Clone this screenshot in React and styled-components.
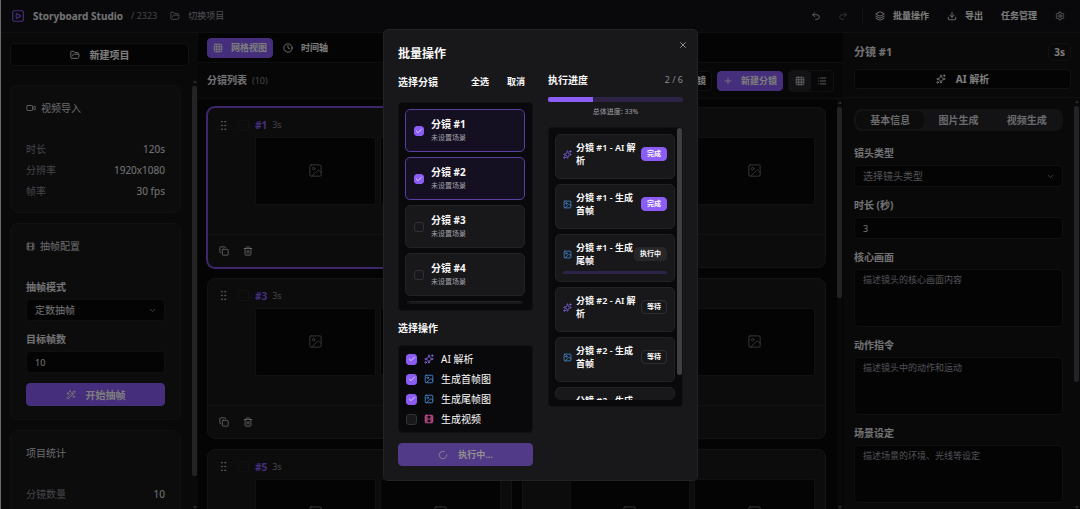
import styled, { createGlobalStyle, css } from 'styled-components'
import {
   Check,
   ChevronDown,
   Clock,
   Copy,
   Download,
   Film,
   FolderOpen,
   Grid3x3,
   GripVertical,
   Image,
   Layers,
   List,
   LoaderCircle,
   Plus,
   Redo2,
   Settings,
   Sparkles,
   SquarePlay,
   Trash2,
   Undo2,
   Video,
   WandSparkles,
   X,
} from 'lucide-react'

const GlobalStyle = createGlobalStyle`
   * {
      box-sizing: border-box;
   }
   body {
      margin: 0;
      overflow: hidden;
      background: #09090b;
      color: #fafafa;
      font: 10px/16px 'Noto Sans', 'Noto Sans CJK SC', sans-serif;
   }
   h1, h2, h3, p, ul, dl, dd {
      margin: 0;
      padding: 0;
   }
   ul {
      list-style: none;
   }
   button, input, select, textarea {
      font: inherit;
      color: inherit;
   }
   svg {
      display: block;
      flex-shrink: 0;
   }
`

// ---------- shared parts ----------

const Button = styled.button`
   display: flex;
   align-items: center;
   justify-content: center;
   gap: ${(props) => (props.$wide ? '10px' : '8px')};
   width: ${(props) => (props.$wide ? '100%' : 'auto')};
   height: ${(props) => (props.$tall ? '23px' : '20px')};
   padding: 0 5px;
   border: 1px solid #222225;
   border-radius: 4px;
   background: #09090b;
   font-size: ${(props) => (props.$wide ? '10px' : '9px')};
   font-weight: 700;
   white-space: nowrap;
   cursor: pointer;
   ${(props) =>
      props.$primary &&
      css`
         border-color: #8b5cf6;
         background: #8b5cf6;
      `}
   ${(props) =>
      props.$ghost &&
      css`
         border-color: transparent;
         background: transparent;
      `}
   &:disabled {
      border-color: #513b88;
      background: #513b88;
      color: #94908f;
      font-size: 9px;
      cursor: default;
   }
`

const IconButton = styled.button`
   display: grid;
   place-items: center;
   width: 20px;
   height: 20px;
   padding: 0;
   border: 0;
   border-radius: 4px;
   background: ${(props) => (props.$active ? '#27272a' : 'transparent')};
   color: ${(props) => (props.$muted ? '#71717a' : '#d4d4d8')};
   cursor: pointer;
`

const Field = styled.label`
   display: flex;
   flex-direction: column;
   gap: 4px;
   color: #e4e4e7;
   font-weight: 700;
`

const control = css`
   width: 100%;
   height: 22px;
   padding: 0 8px;
   border: 1px solid #1f1f22;
   border-radius: 4px;
   outline: 0;
   background: #09090b;
   font-weight: 400;
`

const TextInput = styled.input`
   ${control}
   font-size: 9px;
`

const TextArea = styled.textarea`
   ${control}
   display: block;
   height: 58px;
   padding: 2px 8px;
   font-size: 9px;
   resize: none;
   &::placeholder {
      color: #a1a1aa;
   }
`

const SelectBox = styled.span`
   display: grid;
   align-items: center;
   > * {
      grid-area: 1 / 1;
   }
   > svg {
      justify-self: end;
      margin-right: 8px;
      color: #a1a1aa;
      pointer-events: none;
   }
`

const SelectInput = styled.select`
   ${control}
   appearance: none;
   color: ${(props) => (props.$empty ? '#a1a1aa' : '#e4e4e7')};
`

function Select({ options, empty }) {
   return (
      <SelectBox>
         <SelectInput $empty={empty}>
            {options.map((option) => (
               <option key={option}>{option}</option>
            ))}
         </SelectInput>
         <ChevronDown size={9} />
      </SelectBox>
   )
}

const CheckBox = styled.span`
   display: inline-grid;
   place-items: center;
   flex-shrink: 0;
   > * {
      grid-area: 1 / 1;
   }
   > svg {
      color: #fff;
      pointer-events: none;
   }
`

const CheckInput = styled.input`
   appearance: none;
   width: ${(props) => props.$size}px;
   height: ${(props) => props.$size}px;
   margin: 0;
   border: 1px solid ${(props) => (props.$faint ? '#242427' : '#323236')};
   border-radius: 3px;
   background: ${(props) => (props.$dark ? '#18181b' : 'transparent')};
   &:checked {
      border-color: #8b5cf6;
      background: #8b5cf6;
   }
`

function Checkbox({ checked, dark, faint, size = 10, label }) {
   return (
      <CheckBox>
         <CheckInput
            type="checkbox"
            defaultChecked={checked}
            $dark={dark}
            $faint={faint}
            $size={size}
            aria-label={label}
         />
         {checked && <Check size={8} />}
      </CheckBox>
   )
}

const Track = styled.div`
   display: flex;
   flex-direction: column;
   flex-shrink: 0;
   align-items: center;
   gap: 3px;
   width: 5px;
   padding-top: 2px;
   background: #121214;
   &::before,
   &::after {
      content: '';
      border: 2px solid transparent;
   }
   &::before {
      border-top: 0;
      border-bottom: 3px solid #52525b;
   }
   &::after {
      margin-top: auto;
      border-bottom: 0;
      border-top: 3px solid #52525b;
   }
`

const Thumb = styled.div`
   width: 100%;
   height: ${(props) => props.$length};
   border-radius: 2px;
   background: #47474a;
`

function ScrollBar({ length }) {
   return (
      <Track>
         <Thumb $length={length} />
      </Track>
   )
}

// ---------- page frame ----------

const Page = styled.div`
   display: flex;
   flex-direction: column;
   height: 100vh;
   border-left: 1px solid #d4d4d8;
`

const TopBar = styled.header`
   display: flex;
   align-items: center;
   gap: 8px;
   flex-shrink: 0;
   height: 33px;
   padding: 0 9px 0 10px;
   border-bottom: 1px solid #1f1f22;
   background: #131316;
   > svg {
      color: #8b5cf6;
   }
`

const Brand = styled.h1`
   color: #e4e4e7;
   font-size: 10px;
   font-weight: 700;
   white-space: nowrap;
`

const Muted = styled.span`
   color: #8a8a93;
   font-size: 9px;
   font-weight: 400;
   white-space: nowrap;
`

const SwitchLink = styled.a`
   display: flex;
   align-items: center;
   gap: 8px;
   margin-left: 5px;
   color: #a1a1aa;
   font-size: 9px;
   text-decoration: none;
   white-space: nowrap;
`

const Actions = styled.nav`
   display: flex;
   align-items: center;
   gap: 4px;
   margin-left: auto;
   ${Button} {
      padding: 0 6px;
   }
   ${IconButton} {
      width: 23px;
   }
`

const Separator = styled.span`
   width: 1px;
   height: 16px;
   margin: 0 1px 0 3px;
   background: #27272a;
`

const Columns = styled.div`
   display: grid;
   grid-template-columns: 197px minmax(0, 1fr) 237px;
   flex: 1;
   min-height: 0;
`

const Side = styled.aside`
   display: flex;
   flex-direction: column;
   min-height: 0;
   background: #121213;
`

const Scroll = styled.div`
   display: flex;
   flex: 1;
   gap: 11px;
   min-height: 0;
   padding: 0 1px 0 ${(props) => props.$start || 9}px;
   overflow: hidden;
`

const ScrollBody = styled.div`
   display: flex;
   flex: 1;
   flex-direction: column;
   gap: ${(props) => props.$gap || 10}px;
   min-width: 0;
   padding-top: ${(props) => props.$top}px;
`

// ---------- left column ----------

const NewProject = styled.div`
   padding: 10px 9px 12px;
`

const Card = styled.section`
   display: flex;
   flex-direction: column;
   flex-shrink: 0;
   gap: 10px;
   padding: 14px 15px 13px;
   border: 1px solid #222225;
   border-radius: 8px;
   background: #18181b;
`

const CardTitle = styled.h2`
   display: flex;
   align-items: center;
   gap: 5px;
   margin-bottom: 15px;
   color: #d4d4d8;
   font-size: 10px;
   font-weight: 400;
`

const Stats = styled.dl`
   display: grid;
   gap: 5px;
   > div {
      display: flex;
      justify-content: space-between;
   }
   dt {
      color: #8a8a93;
   }
   dd {
      color: #e4e4e7;
   }
`

const Fields = styled.div`
   display: flex;
   flex-direction: column;
   gap: ${(props) => props.$gap}px;
`

function Sidebar() {
   return (
      <Side>
         <NewProject>
            <Button $wide $tall>
               <FolderOpen size={10} />
               新建项目
            </Button>
         </NewProject>
         <Scroll>
            <ScrollBody $top={7}>
               <Card>
                  <CardTitle>
                     <Video size={10} />
                     视频导入
                  </CardTitle>
                  <Stats>
                     <div>
                        <dt>时长</dt>
                        <dd>120s</dd>
                     </div>
                     <div>
                        <dt>分辨率</dt>
                        <dd>1920x1080</dd>
                     </div>
                     <div>
                        <dt>帧率</dt>
                        <dd>30 fps</dd>
                     </div>
                  </Stats>
               </Card>
               <Card>
                  <CardTitle>
                     <Film size={9} />
                     抽帧配置
                  </CardTitle>
                  <Fields $gap={10}>
                     <Field>
                        抽帧模式
                        <Select options={['定数抽帧', '定时抽帧']} />
                     </Field>
                     <Field>
                        目标帧数
                        <TextInput defaultValue="10" />
                     </Field>
                     <Button $wide $tall $primary>
                        <WandSparkles size={10} />
                        开始抽帧
                     </Button>
                  </Fields>
               </Card>
               <Card>
                  <CardTitle>项目统计</CardTitle>
                  <Stats>
                     <div>
                        <dt>分镜数量</dt>
                        <dd>10</dd>
                     </div>
                  </Stats>
               </Card>
            </ScrollBody>
            <ScrollBar length="390px" />
         </Scroll>
      </Side>
   )
}

// ---------- storyboard grid ----------

const Main = styled.main`
   display: flex;
   flex-direction: column;
   min-height: 0;
`

const ViewTabs = styled.div`
   display: flex;
   align-items: center;
   gap: 4px;
   height: 30px;
   padding: 0 9px;
   border-bottom: 1px solid #1c1c1f;
`

const ListHeader = styled.div`
   display: flex;
   align-items: center;
   gap: 5px;
   height: 36px;
   padding: 0 9px;
   border-bottom: 1px solid #1c1c1f;
   background: #0e0e10;
   h2 {
      margin-right: auto;
      color: #e4e4e7;
      font-size: 10px;
      font-weight: 700;
   }
   ${Muted} {
      margin-left: 5px;
   }
`

const Toggle = styled.div`
   display: flex;
   border: 1px solid #222225;
   border-radius: 4px;
   ${IconButton} {
      width: 22px;
   }
`

const Grid = styled.div`
   display: grid;
   flex: 1;
   grid-template-columns: 1fr 1fr;
   align-content: start;
   gap: 10px;
   min-width: 0;
   padding-top: 8px;
`

const Shot = styled.article`
   border: 1px solid ${(props) => (props.$active ? '#7c4ddb' : '#27272a')};
   border-radius: 8px;
   background: #18181b;
   box-shadow: ${(props) => (props.$active ? '0 0 0 1px #7c4ddb' : 'none')};
`

const ShotBody = styled.div`
   display: grid;
   grid-template-columns: 14px 12px 1fr;
   column-gap: 6px;
   align-items: center;
   padding: 9px 10px 29px 9px;
   > svg {
      color: #b4b4bb;
   }
`

const ShotName = styled.h3`
   display: flex;
   align-items: center;
   gap: 5px;
   color: #8b5cf6;
   font-size: 10px;
   font-weight: 700;
`

const Frames = styled.div`
   display: grid;
   grid-column: 3;
   grid-template-columns: 1fr 1fr;
   gap: 4px;
   margin-top: 4px;
`

const Frame = styled.div`
   display: grid;
   place-items: center;
   aspect-ratio: 16 / 9;
   border: 1px solid #222225;
   border-radius: 2px;
   background: #09090b;
   color: #71717a;
`

const ShotFooter = styled.footer`
   display: flex;
   gap: 4px;
   padding: 6px;
   border-top: 1px solid #27272a;
`

function ShotCard({ number, active }) {
   return (
      <Shot $active={active}>
         <ShotBody>
            <GripVertical size={13} strokeWidth={1.5} />
            <Checkbox label={`分镜 #${number}`} size={11} faint />
            <ShotName>
               #{number} <Muted>3s</Muted>
            </ShotName>
            <Frames>
               <Frame>
                  <Image size={15} strokeWidth={1.5} />
               </Frame>
               <Frame>
                  <Image size={15} strokeWidth={1.5} />
               </Frame>
            </Frames>
         </ShotBody>
         <ShotFooter>
            <IconButton aria-label="复制">
               <Copy size={10} />
            </IconButton>
            <IconButton aria-label="删除">
               <Trash2 size={10} />
            </IconButton>
         </ShotFooter>
      </Shot>
   )
}

function Board() {
   return (
      <Main>
         <ViewTabs>
            <Button $primary>
               <Grid3x3 size={10} />
               网格视图
            </Button>
            <Button $ghost>
               <Clock size={10} />
               时间轴
            </Button>
         </ViewTabs>
         <ListHeader>
            <h2>
               分镜列表
               <Muted>(10)</Muted>
            </h2>
            <Button>导入分镜</Button>
            <Button $primary>
               <Plus size={10} />
               新建分镜
            </Button>
            <Toggle>
               <IconButton $active aria-label="网格">
                  <Grid3x3 size={10} />
               </IconButton>
               <IconButton aria-label="列表">
                  <List size={10} />
               </IconButton>
            </Toggle>
         </ListHeader>
         <Scroll>
            <Grid>
               {[1, 2, 3, 4, 5, 6].map((number) => (
                  <ShotCard key={number} number={number} active={number === 1} />
               ))}
            </Grid>
            <ScrollBar length="191px" />
         </Scroll>
      </Main>
   )
}

// ---------- inspector ----------

const InspectorHead = styled.div`
   display: grid;
   grid-template-columns: 1fr auto;
   align-items: center;
   gap: 8px;
   padding: 10px 9px 8px 11px;
   border-bottom: 1px solid #1f1f22;
   h2 {
      color: #e4e4e7;
      font-size: 11px;
      font-weight: 700;
   }
   ${Button} {
      grid-column: 1 / -1;
   }
`

const Duration = styled.span`
   padding: 0 5px;
   border: 1px solid #222225;
   border-radius: 4px;
   font-weight: 700;
`

const Tabs = styled.div`
   display: grid;
   grid-template-columns: 1fr 1fr 1fr;
   padding: 2px;
   border-radius: 8px;
   background: #27272a;
`

const Tab = styled.button`
   height: 18px;
   padding: 0;
   border: 0;
   border-radius: 6px;
   background: ${(props) => (props.$active ? '#19191b' : 'transparent')};
   color: #d4d4d8;
   font-weight: 700;
`

function Inspector() {
   return (
      <Side>
         <InspectorHead>
            <h2>分镜 #1</h2>
            <Duration>3s</Duration>
            <Button $wide>
               <Sparkles size={10} />
               AI 解析
            </Button>
         </InspectorHead>
         <Scroll $start={11}>
            <ScrollBody $top={11} $gap={14}>
               <Tabs>
                  <Tab $active>基本信息</Tab>
                  <Tab>图片生成</Tab>
                  <Tab>视频生成</Tab>
               </Tabs>
               <Fields $gap={10}>
                  <Field>
                     镜头类型
                     <Select empty options={['选择镜头类型', '特写', '全景']} />
                  </Field>
                  <Field>
                     时长 (秒)
                     <TextInput defaultValue="3" />
                  </Field>
                  <Field>
                     核心画面
                     <TextArea placeholder="描述镜头的核心画面内容" />
                  </Field>
                  <Field>
                     动作指令
                     <TextArea placeholder="描述镜头中的动作和运动" />
                  </Field>
                  <Field>
                     场景设定
                     <TextArea placeholder="描述场景的环境、光线等设定" />
                  </Field>
               </Fields>
            </ScrollBody>
            <ScrollBar length="276px" />
         </Scroll>
      </Side>
   )
}

// ---------- batch dialog ----------

const Overlay = styled.div`
   position: fixed;
   inset: 0;
   display: grid;
   place-items: center;
   padding: 1px 0 0 1px;
   background: rgba(0, 0, 0, 0.5);
`

const Dialog = styled.div`
   width: 100%;
   max-width: 315px;
   padding: 14px;
   border: 1px solid #222225;
   border-radius: 5px;
   background: #18181b;
`

const DialogHead = styled.div`
   display: flex;
   justify-content: space-between;
   height: 18px;
   h2 {
      padding-top: 2px;
      font-size: 12px;
      font-weight: 700;
   }
   ${IconButton} {
      margin: -9px -10px 0 0;
      color: #a1a1aa;
   }
`

const DialogColumns = styled.div`
   display: grid;
   grid-template-columns: minmax(0, 1fr) minmax(0, 1fr);
   gap: 15px;
`

const SectionHead = styled.div`
   display: flex;
   align-items: center;
   justify-content: space-between;
   height: ${(props) => props.$height}px;
   h3 {
      font-size: 10px;
      font-weight: 700;
   }
`

const Links = styled.div`
   display: flex;
   gap: 6px;
   margin-right: 2px;
`

const Panel = styled.div`
   display: flex;
   margin-bottom: ${(props) => props.$after || 0}px;
   border: 1px solid #111113;
   border-radius: 4px;
   background: #09090b;
`

const Viewport = styled.ul`
   display: flex;
   flex: 1;
   flex-direction: column;
   gap: 5px;
   height: ${(props) => props.$height}px;
   margin: 6px 7px 6px 6px;
   overflow: hidden;
   border-radius: 5px;
   li {
      flex-shrink: 0;
   }
`

const Pick = styled.label`
   display: flex;
   align-items: center;
   gap: 7px;
   height: 43px;
   padding: 0 8px;
   border: 1px solid ${(props) => (props.$on ? '#5b3fa0' : '#222225')};
   border-radius: 5px;
   background: ${(props) => (props.$on ? '#150f22' : '#18181b')};
   font-weight: 700;
   line-height: 15px;
   small {
      display: block;
      color: #a1a1aa;
      font-size: 7px;
      font-weight: 400;
      line-height: 12px;
   }
`

const Options = styled.ul`
   flex: 1;
   padding: 3px 7px;
`

const Option = styled.label`
   display: flex;
   align-items: center;
   gap: 7px;
   height: 20px;
`

const Tint = styled.span`
   display: grid;
   color: ${(props) => props.$color};
`

const Bar = styled.div`
   height: ${(props) => props.$height}px;
   overflow: hidden;
   border-radius: 2px;
   background: #2d2347;
`

const BarFill = styled.div`
   height: 100%;
   background: #8b5cf6;
`

const Caption = styled.p`
   height: 25px;
   color: #a1a1aa;
   font-size: 7px;
   line-height: 19px;
   text-align: center;
`

const Task = styled.li`
   height: ${(props) => (props.$running ? 48 : 45)}px;
   padding: 6px 7px;
   border: 1px solid #222225;
   border-radius: 5px;
   background: #18181b;
`

const TaskRow = styled.div`
   display: flex;
   align-items: center;
   margin-bottom: 4px;
   p {
      flex: 1;
      min-width: 0;
      padding-left: 4px;
      font-size: 9px;
      font-weight: 600;
      line-height: 13px;
   }
`

const tones = {
   完成: ['#8b5cf6', '#8b5cf6'],
   执行中: ['#27272a', '#27272a'],
   等待: ['transparent', '#2d2d31'],
}

const Badge = styled.span`
   padding: 0 5px;
   border: 1px solid ${(props) => tones[props.$state][1]};
   border-radius: 4px;
   background: ${(props) => tones[props.$state][0]};
   font-size: 7px;
   font-weight: 700;
   line-height: 12px;
   white-space: nowrap;
`

const PanelThumb = styled.div`
   width: 5px;
   height: 247px;
   margin-left: -5px;
   border-radius: 3px;
   background: #3f3f42;
`

const operations = [
   { name: 'AI 解析', icon: Sparkles, color: '#8b6cf0', on: true },
   { name: '生成首帧图', icon: Image, color: '#4a8fdd', on: true },
   { name: '生成尾帧图', icon: Image, color: '#4a8fdd', on: true },
   { name: '生成视频', icon: Film, color: '#dd559c', on: false },
]

const tasks = [
   { shot: 1, op: 0, name: 'AI 解析', state: '完成' },
   { shot: 1, op: 1, name: '生成首帧', state: '完成' },
   { shot: 1, op: 2, name: '生成尾帧', state: '执行中' },
   { shot: 2, op: 0, name: 'AI 解析', state: '等待' },
   { shot: 2, op: 1, name: '生成首帧', state: '等待' },
   { shot: 2, op: 2, name: '生成尾帧', state: '等待' },
]

function TaskItem({ task }) {
   const { icon: Icon, color } = operations[task.op]
   const running = task.state === '执行中'
   return (
      <Task $running={running}>
         <TaskRow>
            <Tint $color={color}>
               <Icon size={9} />
            </Tint>
            <p>
               分镜 #{task.shot} - {task.name}
            </p>
            <Badge $state={task.state}>{task.state}</Badge>
         </TaskRow>
         {running && <Bar $height={3} />}
      </Task>
   )
}

function BatchDialog() {
   const done = tasks.filter((task) => task.state === '完成').length
   const percent = Math.round((done / tasks.length) * 100)
   return (
      <Overlay>
         <Dialog role="dialog" aria-labelledby="batch-title">
            <DialogHead>
               <h2 id="batch-title">批量操作</h2>
               <IconButton aria-label="关闭">
                  <X size={10} />
               </IconButton>
            </DialogHead>
            <DialogColumns>
               <div>
                  <SectionHead $height={40}>
                     <h3>选择分镜</h3>
                     <Links>
                        <Button $ghost>全选</Button>
                        <Button $ghost>取消</Button>
                     </Links>
                  </SectionHead>
                  <Panel>
                     <Viewport $height={195}>
                        {[1, 2, 3, 4, 5].map((number) => (
                           <li key={number}>
                              <Pick $on={number < 3}>
                                 <Checkbox checked={number < 3} />
                                 <span>
                                    分镜 #{number}
                                    <small>未设置场景</small>
                                 </span>
                              </Pick>
                           </li>
                        ))}
                     </Viewport>
                  </Panel>
                  <SectionHead $height={34}>
                     <h3>选择操作</h3>
                  </SectionHead>
                  <Panel $after={10}>
                     <Options>
                        {operations.map(({ name, icon: Icon, color, on }) => (
                           <li key={name}>
                              <Option>
                                 <Checkbox checked={on} size={11} dark />
                                 <Tint $color={color}>
                                    <Icon size={10} />
                                 </Tint>
                                 {name}
                              </Option>
                           </li>
                        ))}
                     </Options>
                  </Panel>
                  <Button $wide $tall disabled>
                     <LoaderCircle size={10} />
                     执行中...
                  </Button>
               </div>
               <div>
                  <SectionHead $height={35}>
                     <h3>执行进度</h3>
                     <Muted>
                        {done} / {tasks.length}
                     </Muted>
                  </SectionHead>
                  <Bar $height={5}>
                     <BarFill style={{ width: `${percent}%` }} />
                  </Bar>
                  <Caption>总体进度: {percent}%</Caption>
                  <Panel>
                     <Viewport $height={266}>
                        {tasks.map((task) => (
                           <TaskItem key={`${task.shot}-${task.op}`} task={task} />
                        ))}
                     </Viewport>
                     <PanelThumb />
                  </Panel>
               </div>
            </DialogColumns>
         </Dialog>
      </Overlay>
   )
}

function App() {
   return (
      <>
         <GlobalStyle />
         <Page>
            <TopBar>
               <SquarePlay size={14} />
               <Brand>Storyboard Studio</Brand>
               <Muted>/ 2323</Muted>
               <SwitchLink href="#projects">
                  <FolderOpen size={10} />
                  切换项目
               </SwitchLink>
               <Actions>
                  <IconButton aria-label="撤销">
                     <Undo2 size={10} />
                  </IconButton>
                  <IconButton $muted aria-label="重做">
                     <Redo2 size={10} />
                  </IconButton>
                  <Separator />
                  <Button $ghost>
                     <Layers size={10} />
                     批量操作
                  </Button>
                  <Button $ghost>
                     <Download size={10} />
                     导出
                  </Button>
                  <Button $ghost>任务管理</Button>
                  <IconButton aria-label="设置">
                     <Settings size={10} />
                  </IconButton>
               </Actions>
            </TopBar>
            <Columns>
               <Sidebar />
               <Board />
               <Inspector />
            </Columns>
         </Page>
         <BatchDialog />
      </>
   )
}

export default App
